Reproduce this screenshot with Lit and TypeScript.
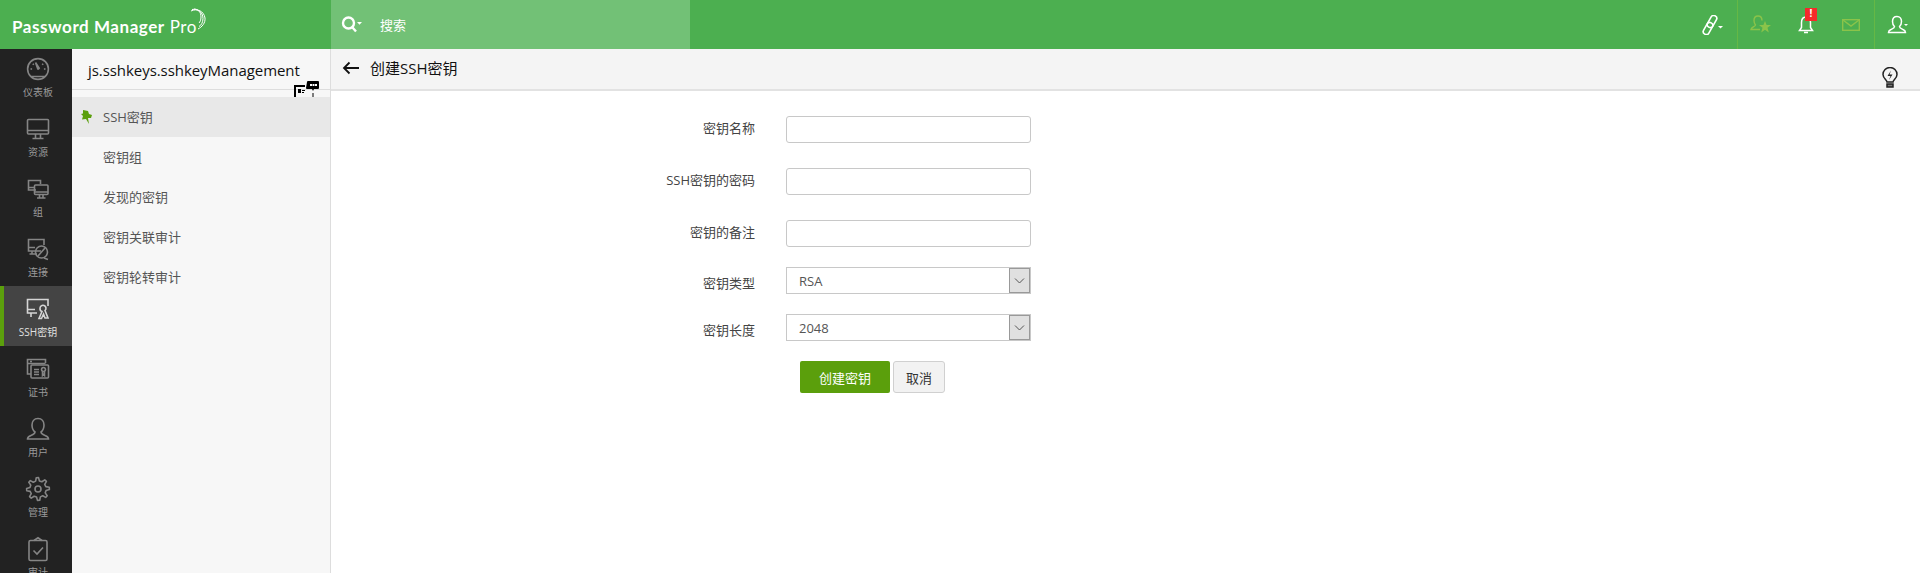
import { LitElement, html, css, svg } from "lit";
import { customElement } from "lit/decorators.js";

function gearPath(): string {
  const pts: string[] = [];
  const n = 8;
  for (let i = 0; i < n; i++) {
    const a = (i / n) * Math.PI * 2 - Math.PI / 2;
    const step = (Math.PI * 2) / n;
    const p = [
      [8.2, -0.5], [11.4, -0.26], [11.4, 0.08], [8.2, 0.3],
    ];
    for (const [r, o] of p) {
      const t = a + o * step * 0.75;
      pts.push(`${(12 + r * Math.cos(t)).toFixed(2)} ${(12 + r * Math.sin(t)).toFixed(2)}`);
    }
  }
  return "M" + pts.join("L") + "Z";
}

const railIcons: Record<string, any> = {
  dash: svg`<circle cx="12" cy="12" r="10.4"/><path d="M5 19.500h14M12 12.500L9.500 5.500M12 12.500l1.200-1.400-3.700-5.600M4.500 12h1.600M19.500 12h-1.600M6.800 6.800l1 1M17.200 6.800l-1 1"/>`,
  res: svg`<rect x="1.500" y="2.500" width="21" height="14.500" rx="1"/><path d="M1.500 13.500h21M9.500 17v4M14.500 17v4M6.500 21.500h11"/>`,
  grp: svg`<path d="M10 13H2.500V3.500h12V7M2.500 10.500H8"/><rect x="8.500" y="8" width="13.500" height="9.500" rx="1"/><path d="M8.500 15h13.500M13.500 17.500v3M17 17.500v3M11 21h8.500"/>`,
  conn: svg`<path d="M15 14H2.500V2.500H18V8M2.500 10.500H9M6 14v3M3.500 17H11"/><circle cx="15.500" cy="15" r="6"/><path d="M12 19l7-8M18 21l4 1.500"/>`,
  ssh: svg`<path d="M11 16H1.500V2.500H22V9M1.500 12.500H9M5 16v4"/><path d="M14 11.500a3 3 0 1 1 5 2l3 7.500h-3l-1.500-4-2 4.500h-2.500l3-7a3 3 0 0 1-2-3z"/>`,
  cert: svg`<path d="M19.500 6V2.500H1.500V17H5M1.500 6.500h18M4 4.500h2"/><rect x="5" y="8" width="17.500" height="13" rx="1"/><path d="M8 12.500h5M8 15h5M8 17.500h5M17.500 10.500a2 2 0 1 1-.01 0zM16.500 14.500v4l1-1 1 1v-4"/>`,
  user: svg`<path d="M12 1.500c-4 0-6 3-6 6.500 0 3 1 5.500 3 7 0 1.800-1.500 2.500-4 3.500-2 .8-3.500 2-3.500 3.500h21c0-1.500-1.500-2.700-3.500-3.500-2.500-1-4-1.700-4-3.500 2-1.500 3-4 3-7 0-3.500-2-6.500-6-6.500z"/>`,
  admin: svg`<circle cx="12" cy="12" r="3"/><path stroke-linejoin="round" d="${gearPath()}"/>`,
  audit: svg`<rect x="3" y="3.500" width="18" height="20" rx="1.500"/><path d="M8 3.500L12 .8l4 2.700M7.500 13.500l3.500 3.500 6-6.500"/>`,
};

const items = [
  ["dash", "仪表板"], ["res", "资源"], ["grp", "组"], ["conn", "连接"], ["ssh", "SSH密钥"],
  ["cert", "证书"], ["user", "用户"], ["admin", "管理"], ["audit", "审计"],
];
const sideItems = ["SSH密钥", "密钥组", "发现的密钥", "密钥关联审计", "密钥轮转审计"];

@customElement("app-root")
export class AppRoot extends LitElement {
  static styles = css`
    :host { display: block; width: 1920px; height: 573px; overflow: hidden; position: relative; background: #fff;
      font-family: "Open Sans", "Noto Sans CJK SC", sans-serif; font-size: 13px; color: #444; }
    .top { height: 49px; background: #4caf50; display: flex; align-items: stretch; }
    .logo { width: 331px; box-sizing: border-box; padding: 3px 0 0 12px; display: flex; align-items: center; color: #fff;
      font-family: "Lato", sans-serif; font-size: 17px; font-weight: 700; letter-spacing: .55px; flex: none; }
    .logo em { font-style: normal; font-weight: 400; margin-left: 5px; }
    .arc { margin-left: -8px; margin-top: -13px; }
    .search { width: 359px; background: #72c176; display: flex; align-items: center; padding-left: 10px; gap: 17px; box-sizing: border-box; color: #fff; font-size: 13px; flex: none; }
    .spacer { flex: 1; }
    .tools { display: flex; align-items: center; }
    .tool { display: flex; align-items: center; justify-content: center; height: 49px; position: relative; }
    .tool.b { border-left: 1px solid #66b845; box-sizing: border-box; }
    .t-link { width: 34px; margin-right: 8px; }
    .t-star { width: 47px; }
    .t-bell { width: 44px; }
    .t-mail { width: 46px; }
    .t-user { width: 46px; }
    .badge { position: absolute; left: 21px; top: 8px; width: 12px; height: 13px; background: #f42a2a; color: #fff; font-size: 10px; font-weight: 700; line-height: 11px; text-align: center; }
    .main { display: flex; height: 524px; }
    .rail { width: 72px; background: #222; flex: none; overflow: hidden; }
    .ri { height: 60px; display: flex; flex-direction: column; align-items: center; justify-content: flex-end; padding-bottom: 7px; box-sizing: border-box; color: #9a9a9a; font-size: 10px; line-height: 14px; gap: 4px; border-left: 4px solid transparent; }
    .ri:first-child { height: 57px; }
    .ri svg { width: 24px; height: 24px; fill: none; stroke: #858585; stroke-width: 1.600; overflow: visible; }
    .ri.on { background: #444; border-left-color: #5b9f0c; color: #e0e0e0; }
    .ri.on svg { stroke: #d5d5d5; }
    .side { width: 259px; background: #f7f7f7; border-right: 1px solid #ddd; flex: none; box-sizing: border-box; position: relative; }
    .stitle { border-bottom: 1px solid #ddd; padding: 2px 0 0 16px; color: #111; font-size: 15px; line-height: 38px; height: 38px; margin-bottom: 7px; letter-spacing: -.06px; }
    .sitem { height: 40px; line-height: 40px; padding-left: 31px; color: #555; position: relative; }
    .sitem.on { background: #e8e8e8; }
    .pin { position: absolute; left: 9px; top: 13px; }
    .chat { position: absolute; left: 222px; top: 32px; }
    .content { flex: 1; display: flex; flex-direction: column; }
    .chead { height: 37px; padding: 0 0 3px 11px; background: #f4f4f4; border-bottom: 2px solid #e2e2e2; display: flex; align-items: center; gap: 11px; color: #111; font-size: 15px; position: relative; flex: none; }
    .bulb { position: absolute; right: 22px; top: 18px; }
    .form { display: grid; grid-template-columns: 424px 245px; column-gap: 31px; padding-top: 25px; align-items: center; }
    .lab { text-align: right; color: #444; box-sizing: border-box; }
    .lab.i { padding-bottom: 5px; }
    .lab.s { padding-top: 3px; }
    .inp { height: 27px; box-sizing: border-box; border: 1px solid #c8c8c8; border-radius: 3px; background: #fff; }
    .r1 { margin-bottom: 25px; }
    .r2 { margin-bottom: 20px; }
    .sel { height: 27px; box-sizing: border-box; border: 1px solid #c8c8c8; display: flex; align-items: center; justify-content: space-between; padding-left: 12px; color: #555; }
    .sel i { width: 21px; height: 25px; background: #e0e0e0; border: 1px solid #999; box-sizing: border-box; display: flex; align-items: center; justify-content: center; }
    .btns { grid-column: 2; display: flex; gap: 3px; margin-left: 14px; }
    .ok { width: 90px; height: 32px; background: #5b9f0c; color: #fff; border-radius: 2px; display: flex; align-items: center; justify-content: center; }
    .no { width: 52px; height: 32px; background: #f2f2f2; border: 1px solid #d0d0d0; border-radius: 3px; box-sizing: border-box; color: #333; display: flex; align-items: center; justify-content: center; }
  `;

  render() {
    const rows = [["密钥名称", "r1"], ["SSH密钥的密码", "r1"], ["密钥的备注", "r2"]];
    const sels = [["密钥类型", "RSA"], ["密钥长度", "2048"]];
    return html`
      <div class="top">
        <div class="logo"><span>Password Manager<em>Pro</em></span>
          <svg class="arc" width="18" height="24" viewBox="0 0 18 24" fill="none" stroke="#fff" stroke-width="1"><path d="M2 3c6-3 13 0 14 7 .5 5-3 9-7 11"/><path d="M3 1.500c5-1 11 2 11 9 0 4-2 7-4 8"/><path d="M5 1c4 0 7 3 7 8 0 3-1 5-2 6"/></svg>
        </div>
        <div class="search">
          <svg width="22" height="17" viewBox="0 0 22 17" fill="none" stroke="#fff" stroke-width="2.400"><circle cx="7.500" cy="7" r="5.500"/><path d="M11.500 11.500l3.500 4"/><path d="M16 6h5l-2.500 2.800z" fill="#fff" stroke="none"/></svg>
          <span>搜索</span>
        </div>
        <div class="spacer"></div>
        <div class="tools">
          <div class="tool t-link">
            <svg width="24" height="20" viewBox="0 0 24 20" fill="none" stroke="#fff" stroke-width="1.600"><rect x="9" y="0" width="6" height="13" rx="3" transform="rotate(30 12 6.500)"/><rect x="5" y="7" width="6" height="13" rx="3" transform="rotate(30 8 13.500)"/><path d="M18 11h5l-2.500 2.500z" fill="#fff" stroke="none"/></svg>
          </div>
          <div class="tool b t-star">
            <svg width="22" height="20" viewBox="0 0 22 20" fill="none" stroke="#8bc34a" stroke-width="1.400"><path d="M8 1c-3 0-4 2-4 4.500 0 2 .8 3.500 1.500 4.500 0 1.500-4 2-4.500 4.500h9"/><path d="M8 1c3 0 4 2 4 4.500"/><path d="M15 6l1.600 4h4.400l-3.500 2.800 1.300 4.700-3.800-2.800-3.800 2.800 1.300-4.700-3.500-2.800h4.400z" fill="#8bc34a" stroke="none"/></svg>
          </div>
          <div class="tool t-bell">
            <svg width="16" height="20" viewBox="0 0 16 20" fill="none" stroke="#fff" stroke-width="1.500"><path d="M8 2c-3 0-4.500 2.500-4.500 5.500v5L1.500 15.500h13l-2-3v-5C12.500 4.500 11 2 8 2zM6 17.500h4"/></svg>
            <span class="badge">!</span>
          </div>
          <div class="tool t-mail">
            <svg width="18" height="12" viewBox="0 0 18 12" fill="none" stroke="#8bc34a" stroke-width="1.400"><rect x=".7" y=".7" width="16.600" height="10.600"/><path d="M1 1l8 6 8-6"/></svg>
          </div>
          <div class="tool b t-user">
            <svg width="22" height="20" viewBox="0 0 22 20" fill="none" stroke="#fff" stroke-width="1.500"><path d="M10 1.500c-3 0-4.500 2.200-4.500 5 0 2.200.8 4 2 5 0 1.500-1.500 2-3.500 3-1.600.7-2.500 1.500-2.500 3h17c0-1.500-1-2.300-2.500-3-2-1-3.500-1.500-3.500-3 1.200-1 2-2.800 2-5 0-2.800-1.500-5-4.500-5z"/><path d="M17 9h4l-2 2z" fill="#fff" stroke="none"/></svg>
          </div>
        </div>
      </div>
      <div class="main">
        <div class="rail">
          ${items.map(([k, t]) => html`<div class="ri ${k === "ssh" ? "on" : ""}"><svg viewBox="0 0 24 24">${railIcons[k]}</svg><span>${t}</span></div>`)}
        </div>
        <div class="side">
          <div class="stitle">js.sshkeys.sshkeyManagement</div>
          ${sideItems.map((t, i) => html`<div class="sitem ${i === 0 ? "on" : ""}">${i === 0 ? html`<svg class="pin" width="11" height="14" viewBox="0 0 11 14"><path d="M2 0l5 1 1 3 3 1-1 3-3 0 1 6-3-5-4 .5 1-3.500-2-2 2-.5z" fill="#5b9f0c"/></svg>` : ""}${t}</div>`)}
          <svg class="chat" width="26" height="16" viewBox="0 0 26 16"><path d="M11 5H1v11" stroke="#000" stroke-width="2" fill="none"/><path d="M4 8h3v4H4zM8 9h3v1H8zM8 11h2v1H8z" fill="#000"/><path d="M13 1a1 1 0 0 1 1-1h10a1 1 0 0 1 1 1v6a1 1 0 0 1-1 1h-4l-1 2-1-2h-5a1 1 0 0 1-1-1z" fill="#000"/><path d="M19 12v4" stroke="#000"/><path d="M16 3h2v2h-2zM18.500 3h2v2h-2zM21 3h2v2h-2z" fill="#fff"/></svg>
        </div>
        <div class="content">
          <div class="chead">
            <svg width="17" height="14" viewBox="0 0 17 14" fill="none" stroke="#111" stroke-width="1.800"><path d="M17 7H2M7.500 1.500L2 7l5.500 5.500"/></svg>
            <span>创建SSH密钥</span>
            <svg class="bulb" width="16" height="21" viewBox="0 0 16 21" fill="none" stroke="#222" stroke-width="1.500"><path d="M5 15c0-2-4-3.500-4-7.500a7 7 0 0 1 14 0c0 4-4 5.500-4 7.500z"/><path d="M5 17h6v3H5z" fill="#777"/><path d="M9 3.500L5.500 9h3l-1.500 4 3.500-5.500h-3z" fill="#222" stroke="none"/></svg>
          </div>
          <div class="form">
            ${rows.map(([t, c]) => html`<div class="lab i ${c}">${t}</div><div class="inp ${c}"></div>`)}
            ${sels.map(([t, v]) => html`<div class="lab s r2">${t}</div><div class="sel r2">${v}<i><svg width="11" height="6" viewBox="0 0 11 6" fill="none" stroke="#555"><path d="M1 .5l4.500 4.500L10 .5"/></svg></i></div>`)}
            <div class="btns"><div class="ok">创建密钥</div><div class="no">取消</div></div>
          </div>
        </div>
      </div>
    `;
  }
}
